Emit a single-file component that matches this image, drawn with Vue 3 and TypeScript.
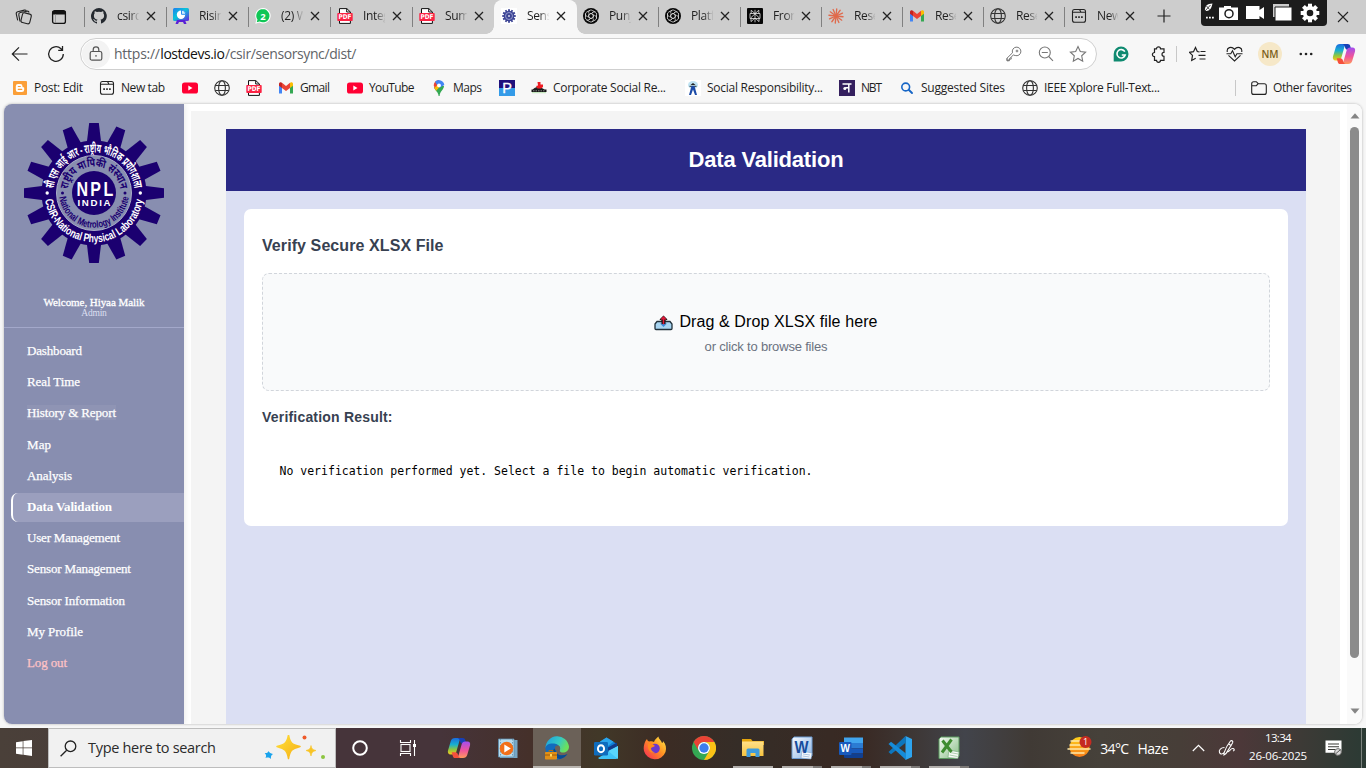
<script setup lang="ts">
import type { Directive } from 'vue'

/* Spreads the letters of an element so that its text takes the given width. */
const vFit: Directive<HTMLElement, number> = {
  mounted(el, { value }) {
    const count = (el.textContent ?? '').length
    const natural = el.getBoundingClientRect().width
    if (count > 1 && value) el.style.letterSpacing = `${(value - natural) / (count - 1)}px`
  },
}

interface Tab { icon: string; title: string; width: number; active?: boolean; noSep?: boolean }
const tabs: Tab[] = [
  { icon: 'github', title: 'csirdo', width: 82 },
  { icon: 'present', title: 'Risin', width: 82 },
  { icon: 'whatsapp', title: '(2) W', width: 82 },
  { icon: 'pdf', title: 'Integ', width: 82 },
  { icon: 'pdf', title: 'Sumr', width: 82 },
  { icon: 'gear', title: 'Sens', width: 82, active: true },
  { icon: 'gpt', title: 'Punj', width: 82, noSep: true },
  { icon: 'gpt', title: 'Platf', width: 82 },
  { icon: 'perplex', title: 'Fron', width: 81 },
  { icon: 'claude', title: 'Rese', width: 81 },
  { icon: 'gmail', title: 'Rese', width: 81 },
  { icon: 'globe', title: 'Rese', width: 81 },
  { icon: 'newtab', title: 'New', width: 82 },
]

interface Mark { icon: string; title?: string; fit?: number; width: number }
const marks: Mark[] = [
  { icon: 'blogger', title: 'Post: Edit', fit: 49, width: 87 },
  { icon: 'newtab', title: 'New tab', fit: 44, width: 83 },
  { icon: 'youtube', width: 32 },
  { icon: 'globe', width: 32 },
  { icon: 'pdf', width: 32 },
  { icon: 'gmail', title: 'Gmail', fit: 30, width: 69 },
  { icon: 'youtube', title: 'YouTube', fit: 45.5, width: 84 },
  { icon: 'maps', title: 'Maps', fit: 29, width: 68 },
  { icon: 'pbox', width: 32 },
  { icon: 'corp', title: 'Corporate Social Re...', fit: 113, width: 154 },
  { icon: 'social', title: 'Social Responsibility...', fit: 116, width: 154 },
  { icon: 'nbt', title: 'NBT', fit: 21, width: 60 },
  { icon: 'bing', title: 'Suggested Sites', fit: 84, width: 123 },
  { icon: 'globe', title: 'IEEE Xplore Full-Text...', fit: 116, width: 150 },
]

interface NavItem { label: string; fit: number; kind?: string }
const nav: NavItem[] = [
  { label: 'Dashboard', fit: 55 },
  { label: 'Real Time', fit: 53 },
  { label: 'History & Report', fit: 89, kind: 'marked' },
  { label: 'Map', fit: 24 },
  { label: 'Analysis', fit: 45 },
  { label: 'Data Validation', fit: 85, kind: 'active' },
  { label: 'User Management', fit: 93 },
  { label: 'Sensor Management', fit: 104 },
  { label: 'Sensor Information', fit: 98 },
  { label: 'My Profile', fit: 56 },
  { label: 'Log out', fit: 40, kind: 'logout' },
]

interface TaskApp { icon: string; state?: string }
const apps: TaskApp[] = [
  { icon: 'copilot' },
  { icon: 'media' },
  { icon: 'edge', state: 'focused' },
  { icon: 'outlook' },
  { icon: 'firefox' },
  { icon: 'chrome' },
  { icon: 'folder', state: 'open' },
  { icon: 'wordold', state: 'multi' },
  { icon: 'word', state: 'multi' },
  { icon: 'vscode', state: 'multi' },
  { icon: 'excel', state: 'multi' },
]

const teeth = Array.from({ length: 16 }, (_, i) => i * 22.5)
const miniTeeth = Array.from({ length: 12 }, (_, i) => i * 30)
const rays = Array.from({ length: 12 }, (_, i) => i * 30)
</script>

<template>
  <div class="screen">
    <svg class="sprite" width="0" height="0" aria-hidden="true">
      <defs>
        <linearGradient id="gPresent" x1="0" y1="0" x2="1" y2="1"><stop offset="0" stop-color="#1f7cf0" /><stop offset=".45" stop-color="#08c5d8" /><stop offset="1" stop-color="#6b1de0" /></linearGradient>
        <linearGradient id="gCopA" x1="0" y1="0" x2="0" y2="1"><stop offset="0" stop-color="#1a6be0" /><stop offset=".4" stop-color="#18b0d0" /><stop offset=".7" stop-color="#8fc63f" /><stop offset="1" stop-color="#f8c81c" /></linearGradient>
        <linearGradient id="gCopB" x1="0" y1="0" x2="0" y2="1"><stop offset="0" stop-color="#ff9a5c" /><stop offset=".45" stop-color="#f0559a" /><stop offset="1" stop-color="#a24df0" /></linearGradient>
        <linearGradient id="gEdge" x1="0" y1="0" x2="1" y2=".4"><stop offset="0" stop-color="#1b9de2" /><stop offset=".6" stop-color="#35c9c4" /><stop offset="1" stop-color="#6be05c" /></linearGradient>
        <linearGradient id="gFire" x1="1" y1="0" x2="0" y2="1"><stop offset="0" stop-color="#fff04a" /><stop offset=".45" stop-color="#ff9322" /><stop offset="1" stop-color="#f5205a" /></linearGradient>
        <linearGradient id="gFolder" x1="0" y1="0" x2="0" y2="1"><stop offset="0" stop-color="#ffe08a" /><stop offset="1" stop-color="#f6c33f" /></linearGradient>
        <linearGradient id="gSun" x1="0" y1="0" x2="0" y2="1"><stop offset="0" stop-color="#ffd21c" /><stop offset="1" stop-color="#f57a18" /></linearGradient>
        <linearGradient id="gDoc" x1="0" y1="0" x2="1" y2="1"><stop offset="0" stop-color="#f4f9ff" /><stop offset="1" stop-color="#8fb6e4" /></linearGradient>
        <linearGradient id="gDocG" x1="0" y1="0" x2="1" y2="1"><stop offset="0" stop-color="#f6fbf4" /><stop offset="1" stop-color="#86bd86" /></linearGradient>
        <linearGradient id="gStar" x1="0" y1="0" x2="1" y2="1"><stop offset="0" stop-color="#ffdf3a" /><stop offset="1" stop-color="#f5b016" /></linearGradient>
      </defs>
      <symbol id="github" viewBox="0 0 16 16"><path fill="#24292f" d="M8 0a8 8 0 0 0-2.5 15.6c.4.1.5-.2.5-.4v-1.5c-2.2.5-2.7-1-2.7-1-.4-.9-.9-1.2-.9-1.2-.7-.5.1-.5.1-.5.8.1 1.2.8 1.2.8.7 1.3 1.9.9 2.3.7.1-.5.3-.9.5-1.1-1.8-.2-3.6-.9-3.6-4 0-.9.3-1.6.8-2.1-.1-.2-.4-1 .1-2.1 0 0 .7-.2 2.2.8a7.500 7.500 0 0 1 4 0c1.500-1 2.200-.8 2.200-.8.4 1.100.2 1.900.1 2.100.5.6.8 1.300.8 2.100 0 3.100-1.900 3.800-3.700 4 .3.300.6.800.6 1.500v2.200c0 .2.100.5.600.400A8 8 0 0 0 8 0z" /></symbol>
      <symbol id="present" viewBox="0 0 16 16"><rect y="0" width="16" height="13" rx="1.500" fill="url(#gPresent)" /><path d="M4 12h8l1.500 4H11l-1-2H6l-1 2H2.500z" fill="#5b21d6" /><circle cx="8" cy="6.800" r="4.200" fill="#fff" /><path d="M8.500 2v4.300h4.300A4.500 4.500 0 0 0 8.500 2z" fill="#cfeefd" stroke="#2a8ff0" stroke-width="1" /></symbol>
      <symbol id="whatsapp" viewBox="0 0 16 16"><path d="M.3 15.700 1.400 11.800A7.700 7.700 0 1 1 4.400 14.600z" fill="#fff" /><path d="M1.700 14.300l.8-2.700A6.600 6.600 0 1 1 4.600 13.500z" fill="#10c656" /><text x="8" y="11.500" text-anchor="middle" font-family="Open Sans, sans-serif" font-size="9.500" font-weight="700" fill="#fff">2</text></symbol>
      <symbol id="pdf" viewBox="0 0 16 16"><path d="M2.500 5V.6h7.300L13.400 4v11.400H2.500V5" fill="#fff" stroke="#111" stroke-width="1" /><path d="M9.700.5V4h3.700" fill="none" stroke="#111" /><rect x=".3" y="5" width="15.400" height="8" rx=".8" fill="#fb2344" /><text x="8" y="11.400" text-anchor="middle" font-family="DejaVu Sans, sans-serif" font-size="6.500" font-weight="700" fill="#fff" textLength="13" lengthAdjust="spacingAndGlyphs">PDF</text></symbol>
      <symbol id="gear" viewBox="0 0 16 16"><rect width="16" height="16" fill="#fff" /><g fill="#3d4595"><rect v-for="a in miniTeeth" :key="a" x="7.100" y="1.200" width="1.800" height="3" :transform="`rotate(${a} 8 8)`" /><circle cx="8" cy="8" r="5.300" /></g><circle cx="8" cy="8" r="3.500" fill="none" stroke="#a9aedb" stroke-width=".8" /><circle cx="8" cy="8" r="1" fill="#d5d8ee" /></symbol>
      <symbol id="gpt" viewBox="0 0 16 16"><circle cx="8" cy="8" r="8" fill="#080808" /><g fill="none" stroke="#d8d8d8" stroke-width=".8"><path v-for="a in [0, 60, 120, 180, 240, 300]" :key="a" d="M5.700 5.500V4.300a2.300 2.300 0 0 1 3.500-2l3.200 1.900M8 5.400 5.700 6.700V9.300" :transform="`rotate(${a} 8 8)`" /></g></symbol>
      <symbol id="perplex" viewBox="0 0 16 16"><rect width="16" height="16" rx="1" fill="#070707" /><path d="M8 1.800v12.500M3 5.500h10v5H3zM8 5.600 4.200 2.200v3.300M8 5.600l3.800-3.400v3.300M8 5.800l-4 3.800v4L8 10M8 5.800l4 3.800v4L8 10" fill="none" stroke="#e6e6e6" stroke-width=".8" /></symbol>
      <symbol id="claude" viewBox="0 0 16 16"><g stroke="#e0694b" stroke-width="1.300" stroke-linecap="round"><path v-for="a in rays" :key="a" d="M8 8V.900" :transform="`rotate(${a + 6} 8 8)`" /></g></symbol>
      <symbol id="gmail" viewBox="0 0 16 16"><path d="M1 3.500v10h3V7z" fill="#4285f4" /><path d="M15 3.500v10h-3V7z" fill="#34a853" /><path d="M1 4c0-2 2-2 3-1.200V8L1 5.800z" fill="#c5221f" /><path d="M15 4c0-2-2-2-3-1.200V8l3-2.200z" fill="#fbbc04" /><path d="M4 2.800 8 6l4-3.200V8l-4 3-4-3z" fill="#ea4335" /></symbol>
      <symbol id="globe" viewBox="0 0 16 16"><g fill="none" stroke="#333" stroke-width="1.100"><circle cx="8" cy="8" r="7.300" /><ellipse cx="8" cy="8" rx="3.400" ry="7.300" /><path d="M1.300 5.500h13.400M1.300 10.500h13.400" /></g></symbol>
      <symbol id="newtab" viewBox="0 0 16 16"><path d="M3.500 1.500h5l1.500 2.800h4.500v8a2 2 0 0 1-2 2h-9a2 2 0 0 1-2-2v-9a2 2 0 0 1 2-1.800zM1.500 4.300H10M9 1.500h3.500a2 2 0 0 1 2 2v1" fill="none" stroke="#222" stroke-width="1.100" /><path d="M4.300 8.300h1.600v1.600H4.300zM7.200 8.300h1.600v1.600H7.200zM10.100 8.300h1.600v1.600h-1.600z" fill="#222" /></symbol>
      <symbol id="blogger" viewBox="0 0 16 16"><rect x="1" y="1" width="14" height="14" rx="1" fill="#fb9f38" /><path d="M6 4h2.300a2.200 2.200 0 0 1 2.200 2.200c0 .8.100 1 .8 1s.9.300.9.900v1.700A2.300 2.300 0 0 1 9.900 12H6a2.200 2.200 0 0 1-2.200-2.200V6.200A2.200 2.200 0 0 1 6 4z" fill="#fff" /><path d="M6.300 6.500h2M6.300 9.400h3.400" stroke="#fb9f38" stroke-width="1.200" stroke-linecap="round" /></symbol>
      <symbol id="youtube" viewBox="0 0 16 16"><rect x="0" y="2.500" width="16" height="11" rx="2.600" fill="#ff0033" /><path d="M6.300 5.600v4.800L10.500 8z" fill="#fff" /></symbol>
      <symbol id="maps" viewBox="0 0 16 16"><path d="M3 7.500 8 5l5 1c0 3.500-4 5-4.400 10H7.600C7.400 12 4 10.500 3 7.500z" fill="#34a853" /><path d="M2.700 5.200A5.400 5.400 0 0 1 8 0v5.400L3.800 8.500z" fill="#ea4335" /><path d="M4 1.800A5.400 5.400 0 0 1 13.300 5L8 8z" fill="#4285f4" /><path d="M3.200 8 7 4.500 8.500 7 5.200 10.800z" fill="#fbbc04" /><circle cx="8" cy="5.400" r="1.900" fill="#fff" /></symbol>
      <symbol id="pbox" viewBox="0 0 16 16"><rect width="16" height="8" fill="#20107c" /><rect y="8" width="16" height="8" fill="#349be8" /><text x="8.200" y="13" text-anchor="middle" font-family="Liberation Sans, sans-serif" font-size="14.500" fill="#fff" stroke="#fff" stroke-width=".3">P</text></symbol>
      <symbol id="corp" viewBox="0 0 16 16"><path d="M1.500 10.500C2 8.500 4.500 7 7 7s5.500 1.500 7 3.500z" fill="#222" /><path d="M6.500 2h3v2.500H12V7L10 8.500H6.500L5 6l2-.5z" fill="#ee1c24" /><path d="M.5 9.500h15v2.500H.5z" fill="#151515" /><path d="M2 10.800h12" stroke="#888" stroke-dasharray="1.500 1" /><path d="M1 12.700h14" stroke="#b9e3b2" stroke-width="1" /></symbol>
      <symbol id="social" viewBox="0 0 16 16"><rect width="16" height="16" fill="#fff" /><ellipse cx="8" cy="5" rx="5" ry="4" fill="#bfe3f3" /><path d="M8 3 5.500 5h5z" fill="#222" /><path d="M4.500 6.300h7" stroke="#333" /><path d="M6.500 6 4 15h2L8 9.500 10 15h2L9.500 6z" fill="#1b4ba8" /></symbol>
      <symbol id="nbt" viewBox="0 0 16 16"><rect width="16" height="16" fill="#35205f" /><path d="M3.500 4h9M9.800 4v8.500M9.800 7.700H6.200" fill="none" stroke="#fff" stroke-width="1.500" /><circle cx="5.800" cy="8.400" r="1.500" fill="#fff" /></symbol>
      <symbol id="bing" viewBox="0 0 16 16"><circle cx="6.700" cy="7" r="3.900" fill="none" stroke="#1766c6" stroke-width="1.600" /><path d="M9.700 9.800 13 13" stroke="#1766c6" stroke-width="1.900" stroke-linecap="round" /></symbol>
      <symbol id="folderline" viewBox="0 0 16 16"><path d="M.7 3.700c0-1.200.8-2 2-2h2.600l1.900 2h6.100c1.200 0 2 .8 2 2v6.700c0 1.200-.8 2-2 2H2.700c-1.200 0-2-.8-2-2zM.7 5.700h4.600l1.900-2" fill="none" stroke="#222" stroke-width="1.100" /></symbol>
      <symbol id="copilot" viewBox="0 0 24 24"><path d="M8 2h6.300c-1 .8-1.500 1.800-1.900 3L9.400 15.500c-.6 2-1.600 3-3.500 3H3.600C1.400 18.500.4 17 1 14.600L3.800 5C4.400 3 5.800 2 8 2z" fill="url(#gCopA)" /><path d="M10.500 2h5.200c1.600 0 2.200.8 2.600 2.300l1 3.400h-3.200c-1.700 0-2.600-.8-3-2.300C12.700 3.600 12 2.500 10.500 2z" fill="#173fb6" /><g transform="rotate(180 12 12)"><path d="M8 2h6.300c-1 .8-1.500 1.800-1.900 3L9.400 15.500c-.6 2-1.600 3-3.500 3H3.600C1.400 18.500.4 17 1 14.600L3.800 5C4.400 3 5.800 2 8 2z" fill="url(#gCopB)" /><path d="M10.500 2h5.200c1.600 0 2.200.8 2.600 2.300l1 3.400h-3.200c-1.700 0-2.600-.8-3-2.300C12.700 3.600 12 2.500 10.500 2z" fill="#f5503c" /></g></symbol>
      <symbol id="media" viewBox="0 0 24 24"><path d="M4 4h17.500v18H4z" fill="#77a8c6" /><path d="M2.500 3H18v18H2.500z" fill="#b6dcef" stroke="#5d8eae" stroke-width=".8" /><path d="M4.500 3v18M16.500 3v18" stroke="#6b9cb9" stroke-dasharray="1.500 1.500" /><circle cx="10.500" cy="12.500" r="6.800" fill="#f27019" /><path d="M8.300 8.500v8l6.500-4z" fill="#fff" /></symbol>
      <symbol id="edge" viewBox="0 0 24 24"><path d="M.5 12A11.800 11.800 0 0 1 24 10.500c0 4-3 6-6 6-2.500 0-3.500-1-3-2.500C16 10 12 7.500 8 8.500 4 9 1 11 .5 12z" fill="url(#gEdge)" /><path d="M.3 12c1-4 5-5 8.700-4.500 4 .6 5.500 3 5.500 5-4-2-5.500 6 1.500 7 3 .400 5-.5 6-1A12 12 0 0 1 .3 12z" fill="#126bbd" /><path d="M8 14c0 5 3 8 7 9a12 12 0 0 0 7.500-5c-6 3-13 1-12-6z" fill="#084a91" /><circle cx="12.500" cy="12" r="2.600" fill="#6b6158" /><rect x="0" y="16" width="12" height="7.500" rx=".8" fill="#e18f16" /><path d="M0 19h12" stroke="#9e5c08" /><rect x="5" y="18" width="2" height="2.500" fill="#ffd75a" /><path d="M4 16v-1.500h4V16" fill="none" stroke="#b0700b" /></symbol>
      <symbol id="outlook" viewBox="0 0 24 24"><path d="M3 8 12.500 1.500 23 8v3L12 19 5 14z" fill="#0f7fd6" /><path d="M6 5.500 12.500 1.500l7 4.200L10 13z" fill="#2aa5ec" /><path d="m13 12 10-5.500V12l-9 4z" fill="#123b8a" /><path d="M24 10v11c0 1.200-.8 2-2 2H6c-1 0-1.500-.5-2-1z" fill="#3fc3f7" /><path d="M24 23 14 15 24 10z" fill="#58d5fc" /><rect y="6" width="14" height="13.500" rx="1.200" fill="#0f6cbd" /><ellipse cx="7" cy="12.700" rx="3.100" ry="3.500" fill="none" stroke="#fff" stroke-width="1.900" /></symbol>
      <symbol id="firefox" viewBox="0 0 24 24"><path d="M2 6c.5-1 1-2 2-3 .3 1.500 1 2.300 2.500 2.500 2-.5 3.500 0 4.500.5C12 3 14 2 15.500.5 15.500 3 18 4 19 7c.8 0 1-1 1-2 3 3 3.700 7 2.500 11A11.300 11.300 0 0 1 1 15C.3 11.500 1 8.500 2 6z" fill="url(#gFire)" /><circle cx="12" cy="12.500" r="4.800" fill="#6b38cf" /><path d="M5 8c3-1 5 0 7 2-1 1-3 1-4 2 0 2 1 4 4 4.500C8 18 4 14 5 8z" fill="#ff8a1e" /></symbol>
      <symbol id="chrome" viewBox="0 0 24 24"><circle cx="12" cy="12" r="12" fill="#34a853" /><path d="M22.400 6A12 12 0 0 1 12 24l5.200-9A6 6 0 0 0 12 6z" fill="#fbc116" /><path d="M1.600 6A12 12 0 0 1 22.400 6H12a6 6 0 0 0-5.200 9z" fill="#ea4335" /><circle cx="12" cy="12" r="6" fill="#fff" /><circle cx="12" cy="12" r="4.700" fill="#3b7ded" /></symbol>
      <symbol id="folder" viewBox="0 0 24 24"><path d="M1 3h9l1.500 2H23v4H1z" fill="#e5a50c" /><path d="M1 5.500h21.500V20H1z" fill="url(#gFolder)" /><path d="M5.500 21v-7a1.500 1.500 0 0 1 1.500-1.500h10a1.500 1.500 0 0 1 1.500 1.500v7h-4v-4h-5v4z" fill="#3f9bdc" /></symbol>
      <symbol id="wordold" viewBox="0 0 24 24"><path d="M4 1h18v19l-3 2.500H2V3z" fill="url(#gDoc)" stroke="#6d9bd1" /><path d="m12 15 10 2-1 6-10-1z" fill="#f7fafd" stroke="#7ea4ce" stroke-width=".6" /><path d="m13 18 7 1M12.500 20l7 1" stroke="#8fb0d4" stroke-width=".7" /><text x="11.500" y="16.500" text-anchor="middle" font-family="Liberation Sans, sans-serif" font-size="16" font-weight="700" fill="#164c9c" textLength="14" lengthAdjust="spacingAndGlyphs">W</text></symbol>
      <symbol id="word" viewBox="0 0 24 24"><path d="M5 1.500h19V7H5z" fill="#41a5ee" /><path d="M5 7h19v5.300H5z" fill="#2b7cd3" /><path d="M5 12.300h19v5.200H5z" fill="#185abd" /><path d="M5 17.500h19V21a1 1 0 0 1-1 1H6a1 1 0 0 1-1-1z" fill="#103f91" /><rect y="6" width="12.500" height="13" rx="1" fill="#185abd" /><text x="6.200" y="16" text-anchor="middle" font-family="Liberation Sans, sans-serif" font-size="10" font-weight="700" fill="#fff">W</text></symbol>
      <symbol id="vscode" viewBox="0 0 24 24"><path d="M17.500 0 24 3v18l-6.500 3z" fill="#2da4ee" /><path d="m17.500 0 .5 6.500L3 18.300.5 16z" fill="#0d76bd" /><path d="M.5 8 3 5.800 18 17.500v6.500z" fill="#168bd8" /></symbol>
      <symbol id="excel" viewBox="0 0 24 24"><path d="M4 1h18v19l-3 2.500H2V3z" fill="url(#gDocG)" stroke="#5a9a5f" /><path d="m12 14 10 2-1 6.500-10-1z" fill="#f7fbf6" stroke="#6ea573" stroke-width=".6" /><path d="m13 16.500 8 1.500M12.500 19l8 1.500" stroke="#8dba90" stroke-width=".7" /><path d="m5.500 4.500 9 11.500M14.500 3.500 5 16.500" stroke="#3d8c2f" stroke-width="3" /></symbol>
    </svg>

    <header class="tabstrip">
      <div class="lead">
        <svg width="18" height="18" viewBox="0 0 18 18" fill="none" stroke="#222" stroke-width="1.100"><rect x="6.700" y="5.300" width="9" height="10" rx="2" transform="rotate(14 11 10)" /><path d="M5 13.500 3.800 6.800c-.2-1.300.4-2 1.500-2.300L12 3.200c1.100-.2 1.800.2 2.100 1.300M2.700 12.300 1.300 6.100C1 4.800 1.600 4 2.700 3.700l6.600-1.600c1-.2 1.700.1 2 .8" /></svg>
        <svg width="16" height="16" viewBox="0 0 16 16"><rect x="1.600" y="1.600" width="12.800" height="12.800" rx="2" fill="none" stroke="#111" stroke-width="1.300" /><path d="M1.500 2h13v3.500h-13z" fill="#111" /><path d="M4.500 5v9" stroke="#888" stroke-width=".7" /></svg>
      </div>
      <div v-for="(t, i) in tabs" :key="i" class="tab" :class="{ active: t.active, nosep: t.noSep, slim: i > 7 }" :style="{ width: t.width + 'px' }">
        <svg class="fav"><use :href="'#' + t.icon" /></svg>
        <span class="tabtitle">{{ t.title }}</span>
        <svg class="close" viewBox="0 0 10 10"><path d="m1 1 8 8M9 1 1 9" stroke="#222" stroke-width="1.300" /></svg>
      </div>
      <div class="plus"><svg width="14" height="14" viewBox="0 0 14 14"><path d="M7 .5v13M.5 7h13" stroke="#222" stroke-width="1.200" /></svg></div>
      <div class="capture">
        <svg width="126" height="26" viewBox="0 0 126 26" fill="#fff">
          <path d="M4 11c-.5-3 1-6 4-7l3.500-.5L10.500 7c-1 3-3.500 4.500-6.500 4z" /><path d="m4 11 5.500-6M5.500 6l3 3.500" stroke="#1c1c1c" stroke-width=".8" />
          <path d="M5 16.700h1.800v1.800H5zM8 16.700h1.800v1.800H8zM11 16.700h1.800v1.800H11z" />
          <path d="M18 7.500h5V6h7v1.500h7V20H18z" /><circle cx="28" cy="13.700" r="4" fill="#fff" stroke="#1c1c1c" stroke-width="1.500" />
          <path d="M45 6h13.500v4L63 7v12l-4.500-3v3H45z" />
          <path d="M72 4h16v13H72z" fill="#ccc" /><path d="M74 7h17v14H74z" stroke="#1c1c1c" />
          <g transform="translate(109 13)"><circle r="5.200" fill="none" stroke="#fff" stroke-width="3.800" /><rect v-for="a in [0, 45, 90, 135, 180, 225, 270, 315]" :key="a" x="-2" y="-9.300" width="4" height="4" :transform="`rotate(${a})`" /></g>
        </svg>
      </div>
      <div class="winclose"><svg width="12" height="12" viewBox="0 0 12 12"><path d="m1 1 10 10M11 1 1 11" stroke="#222" stroke-width="1.100" /></svg></div>
    </header>

    <div class="toolbar">
      <div class="tool back"><svg width="18" height="16" viewBox="0 0 18 16" fill="none" stroke="#222" stroke-width="1.200"><path d="M16.500 8H1.500M8 1.300 1.300 8 8 14.700" /></svg></div>
      <div class="tool reload"><svg width="18" height="18" viewBox="0 0 18 18" fill="none" stroke="#222" stroke-width="1.300"><path d="M16.300 9A7.300 7.300 0 1 1 14 3.700l1.300 1.400M15.500 1v4.300h-4.300" /></svg></div>
      <div class="address">
        <div class="lock"><svg width="14" height="16" viewBox="0 0 14 16" fill="none" stroke="#555" stroke-width="1.200"><rect x="1.200" y="5.500" width="11.600" height="8.700" rx="1.800" /><path d="M4.200 5.500V3.700a2.800 2.800 0 0 1 5.600 0v1.800" /><circle cx="7" cy="9.900" r=".8" fill="#555" stroke="none" /></svg></div>
        <div class="url"><span v-fit="46">https://</span><span v-fit="64.500" class="host">lostdevs.io</span><span v-fit="131.500">/csir/sensorsync/dist/</span></div>
        <div class="fieldicons">
          <svg width="16" height="16" viewBox="0 0 16 16" fill="none" stroke="#777" stroke-width="1"><path d="M7.300 9 2.600 13.700v1H1v-2.500L6.500 6.800A4.300 4.300 0 1 1 9.200 9.500z" /><path d="M1 12.200v2.500h2.500v-1.600h1.700v-1.700" /><circle cx="11" cy="5" r=".9" /></svg>
          <svg width="16" height="16" viewBox="0 0 16 16" fill="none" stroke="#777" stroke-width="1.100"><circle cx="6.800" cy="6.500" r="5.500" /><path d="M3.800 6.500h6M10.700 10.500 15 14.800" /></svg>
          <svg width="18" height="18" viewBox="0 0 18 18" fill="none" stroke="#777" stroke-width="1.100"><path d="m9 1.500 2.300 5 5.300.6-3.900 3.700 1 5.400L9 13.500l-4.700 2.700 1-5.400L1.400 7.100l5.300-.6z" /></svg>
        </div>
      </div>
      <div class="tool ext"><svg width="16" height="16" viewBox="0 0 16 16"><path d="M8 .5A7.500 7.500 0 1 1 8 15.500H.7V8A7.400 7.400 0 0 1 8 .5z" fill="#0f8a70" /><path d="M11.800 5.600A4.200 4.200 0 1 0 12.200 9H8.800" fill="none" stroke="#fff" stroke-width="1.600" /></svg></div>
      <div class="tool"><svg width="17" height="17" viewBox="0 0 17 17" fill="none" stroke="#222" stroke-width="1.200"><path d="M4.500 2.800h2a2 2 0 0 1 4 0h3.500v3.500a2 2 0 0 0 0 4v4h-3.500a2 2 0 0 1-4 0h-2v-3.600a2.100 2.100 0 1 1 0-4.200z" /></svg></div>
      <i class="divider"></i>
      <div class="tool fav2"><svg width="18" height="17" viewBox="0 0 18 17" fill="none" stroke="#222" stroke-width="1.200"><path d="M10.500 5.800 8.300 5.500 6.500 1.500l-2 4.200-4 .6 3 3.100L2.700 14.500l4-2.200M11.500 5.500h5M9.500 9.300h7M10.500 13h6" /></svg></div>
      <div class="tool"><svg width="17" height="16" viewBox="0 0 17 16" fill="none" stroke="#222" stroke-width="1.100"><path d="M1.300 6C.3 1.500 5.500-.3 8.500 3.300 11.500-.3 16.700 1.500 15.700 6M2.500 9.300l6 5.600 6-5.600M.5 7.700h4.300l1.700-3 2.700 6 1.700-3h5.600" /></svg></div>
      <div class="tool"><span class="avatar">NM</span></div>
      <div class="tool"><svg width="14" height="4" viewBox="0 0 14 4" fill="#222"><circle cx="1.800" cy="2" r="1.300" /><circle cx="7" cy="2" r="1.300" /><circle cx="12.200" cy="2" r="1.300" /></svg></div>
      <div class="tool pilot"><svg width="24" height="24"><use href="#copilot" /></svg></div>
    </div>

    <nav class="bookmarks">
      <div v-for="(m, i) in marks" :key="i" class="mark" :style="{ width: m.width + 'px' }">
        <svg class="fav"><use :href="'#' + m.icon" /></svg>
        <span v-if="m.title" v-fit="m.fit ?? 0" class="marktext">{{ m.title }}</span>
      </div>
      <i class="divider"></i>
      <div class="mark other"><svg class="fav"><use href="#folderline" /></svg><span v-fit="79" class="marktext">Other favorites</span></div>
    </nav>

    <div class="frame">
      <div class="page">
        <aside class="sidebar">
          <svg class="logo" width="144" height="144" viewBox="-72 -72 144 144">
            <defs>
              <path id="outTop" d="M-40.500 0A40.500 40.500 0 0 1 40.500 0" />
              <path id="outBot" d="M-49.300 0A49.300 49.300 0 0 0 49.300 0" />
              <path id="inTop" d="M-26.500 0A26.500 26.500 0 0 1 26.500 0" />
              <path id="inBot" d="M-34.800 0A34.800 34.800 0 0 0 34.800 0" />
            </defs>
            <g fill="#1b0070">
              <path v-for="a in teeth" :key="a" d="M-7.500-48-4.800-70H4.800L7.500-48z" :transform="`rotate(${a})`" />
              <circle r="52.500" />
            </g>
            <circle r="37.500" fill="#888eb0" stroke="#a9adc8" stroke-width="1" />
            <circle r="22" fill="#1b0070" />
            <g fill="#fff" font-family="Noto Sans, Liberation Sans, sans-serif" font-weight="700" text-anchor="middle">
              <text font-size="12.500"><textPath href="#outTop" startOffset="50%" textLength="118" lengthAdjust="spacingAndGlyphs">सी एस आई आर - राष्ट्रीय भौतिक प्रयोगशाला</textPath></text>
              <text font-size="11.500" font-family="Liberation Sans"><textPath href="#outBot" startOffset="50%" textLength="141" lengthAdjust="spacingAndGlyphs">CSIR-National Physical Laboratory</textPath></text>
              <text x="1" y="3" font-size="20" font-family="Liberation Sans" textLength="46" lengthAdjust="spacing" transform="scale(.8 1)">NPL</text>
              <text y="13" font-size="9.700" font-family="Liberation Sans" textLength="33" lengthAdjust="spacing">INDIA</text>
              <circle cx="-46.800" r="1.700" /><circle cx="46.300" r="1.700" />
            </g>
            <g fill="#1b0070" font-family="Noto Sans, Liberation Sans, sans-serif" font-weight="700" text-anchor="middle">
              <text font-size="11.500"><textPath href="#inTop" startOffset="50%" textLength="75" lengthAdjust="spacingAndGlyphs">राष्ट्रीय मापिकी संस्थान</textPath></text>
              <text font-size="10" font-family="Liberation Sans"><textPath href="#inBot" startOffset="50%" textLength="101" lengthAdjust="spacingAndGlyphs">National Metrology Institute</textPath></text>
              <circle cx="-31.500" r="1.500" /><circle cx="31" r="1.500" />
            </g>
          </svg>
          <div class="welcome"><span v-fit="101">Welcome, Hiyaa Malik</span></div>
          <div class="role"><span v-fit="25.500">Admin</span></div>
          <ul class="menu">
            <li v-for="n in nav" :key="n.label" :class="n.kind"><span v-fit="n.fit">{{ n.label }}</span></li>
          </ul>
        </aside>
        <main class="main">
          <section class="panel">
            <h1><span v-fit="155">Data Validation</span></h1>
            <div class="card">
              <h2><span v-fit="181.500">Verify Secure XLSX File</span></h2>
              <div class="drop">
                <p class="big">
                  <svg width="19" height="16" viewBox="0 0 19 16"><path d="M1 9 3 6.500h13L18 9v4.500a1 1 0 0 1-1 1H2a1 1 0 0 1-1-1z" fill="#a8d5f2" stroke="#20303a" stroke-width="1.300" /><path d="m6 8.500 3.500 3.500L13 8.500z" fill="#3b8ad9" /><path d="M5.500 4.500 9.500.5l4 4-2 1V9h-4V5.500z" fill="#111" /><path d="M9.500 9.300V2.800M7.300 4.500l2.200-2.300 2.200 2.300" stroke="#e0193a" stroke-width="1.600" fill="none" /></svg>
                  <span v-fit="198">Drag &amp; Drop XLSX file here</span>
                </p>
                <p class="small"><span v-fit="123">or click to browse files</span></p>
              </div>
              <h3><span v-fit="130.500">Verification Result:</span></h3>
              <pre><span v-fit="533">No verification performed yet. Select a file to begin automatic verification.</span></pre>
            </div>
          </section>
        </main>
        <div class="scroll">
          <svg width="10" height="6" viewBox="0 0 10 6"><path d="M5 .3 9.500 5.500h-9z" fill="#858585" /></svg>
          <div class="track"><div class="thumb"></div></div>
          <svg width="10" height="6" viewBox="0 0 10 6"><path d="M5 5.700.5.500h9z" fill="#858585" /></svg>
        </div>
      </div>
    </div>

    <footer class="taskbar">
      <div class="start"><svg width="16" height="16" viewBox="0 0 16 16" fill="#fff"><path d="M0 2.200 6.700 1.200v6.400H0zM7.400 1.100 16 0v7.600H7.400zM0 8.300h6.700v6.400L0 13.800zM7.400 8.300H16V16l-8.600-1.200z" /></svg></div>
      <div class="search">
        <svg width="17" height="17" viewBox="0 0 17 17" fill="none" stroke="#222" stroke-width="1.300"><circle cx="10.500" cy="6.300" r="5.300" /><path d="M6.700 10.200.6 16.300" /></svg>
        <span v-fit="128">Type here to search</span>
        <svg class="sparkle" width="62" height="26" viewBox="0 0 62 26"><path d="M24.500 0c1.500 8 3 9.500 11.500 11.500C27.500 14 26 15 24.500 23.500 23 15 21 14 13 11.500 21 9.500 23 8 24.500 0z" fill="url(#gStar)" stroke="url(#gStar)" stroke-width="1.500" stroke-linejoin="round" /><path d="M47 10.500c.7 3.500 1.500 4 5 5-3.500 1-4.300 2-5 5.500-.7-3.500-1.500-4.500-5-5.500 3.500-1 4.300-1.500 5-5z" fill="#f8c425" stroke="#f8c425" stroke-width=".6" /><path d="M4.500 16c1.200 2 2 2.500 4.500 3-2 1.500-2.200 2.300-2 5-2-1.600-3-1.800-5.500-1 1-2.400.8-3-.8-5 2.500.2 3.200-.2 3.800-2z" fill="#1aa3ec" /><circle cx="40.500" cy="2.500" r="2" fill="#ee5a2a" /><circle cx="59" cy="22" r="2" fill="#8cc540" /></svg>
      </div>
      <div class="cell"><svg width="18" height="18" viewBox="0 0 18 18"><circle cx="9" cy="9" r="6.800" fill="none" stroke="#fff" stroke-width="2" /></svg></div>
      <div class="cell"><svg width="18" height="18" viewBox="0 0 18 18" fill="none" stroke="#fff" stroke-width="1.100"><rect x="2" y="5.500" width="9" height="7" /><path d="M1.500 1v2.500h10V1M1.500 17v-2.500h10V17M15.500 1v16" /><path d="M14 5h3v3h-3z" fill="#fff" stroke="none" /></svg></div>
      <div class="apps">
        <div v-for="(a, i) in apps" :key="i" class="app" :class="a.state"><svg width="24" height="24"><use :href="'#' + a.icon" /></svg></div>
      </div>
      <div class="tray">
        <svg class="weather" width="26" height="24" viewBox="0 0 26 24"><circle cx="12.500" cy="12" r="10" fill="url(#gSun)" /><path d="M4 6h9M3 10h10M1 14h22M4 18h13" stroke="#ffe9a8" stroke-width="1.500" stroke-linecap="round" /><circle cx="18.500" cy="7" r="6" fill="#c52b22" /><text x="18.500" y="10.200" text-anchor="middle" font-family="Open Sans, sans-serif" font-size="9" fill="#fff">1</text></svg>
        <span v-fit="29" class="temp">34°C</span><span v-fit="31" class="haze">Haze</span>
        <svg class="chev" width="13" height="8" viewBox="0 0 13 8"><path d="m.8 7 5.700-5.700L12.200 7" fill="none" stroke="#fff" stroke-width="1.200" /></svg>
        <svg class="pen" width="18" height="18" viewBox="0 0 18 18" fill="none" stroke="#fff" stroke-width="1.100"><path d="M6 14c1-3 4-9 6.500-12 1.500-1 3 .3 2 2L8 14.500 6 16zM6.500 8.500C3 8.500.5 11 1.500 13.500s3.500 1.500 5-.5M9.500 13c2.500-1 3-3.500 5-3.500s2.500 2 .5 2.500M11 5l2.500 2" /></svg>
        <div class="clock"><span v-fit="26.500">13:34</span><span v-fit="58">26-06-2025</span></div>
        <svg class="note" width="18" height="17" viewBox="0 0 18 17"><path d="M.5.500h16v12.300h-4V16l-3.200-3.200H.5z" fill="#fff" /><path d="M3 4h11M3 6.700h11M3 9.500h7" stroke="#3a3a36" stroke-width="1.100" /><circle cx="13" cy="12" r="3.400" fill="#ddd" stroke="#3a3a36" stroke-width=".7" /><path d="m11 13.500 4-3.500" stroke="#3a3a36" stroke-width=".8" /></svg>
        <i class="peek"></i>
      </div>
    </footer>
  </div>
</template>

<style>
html, body { margin: 0; overflow: hidden; }
</style>

<style scoped>
.screen { width: 1366px; height: 768px; display: flex; flex-direction: column; background: #f7f7f7; font-family: "Open Sans", "Noto Sans", sans-serif; overflow: hidden; color: #1f1f1f; }
.screen svg { flex: none; display: block; }
.sprite { position: absolute; }
span { white-space: nowrap; display: inline-block; }
.fav { width: 16px; height: 16px; }

.tabstrip { height: 34px; flex: none; display: flex; background: #cdcdcd; }
.lead { width: 84px; display: flex; align-items: center; gap: 18px; padding-left: 15px; box-sizing: border-box; padding-bottom: 1px; }
.tab { box-sizing: border-box; display: flex; align-items: center; padding: 0 0 2px 7px; position: relative; flex: none; }
.tab::before { content: ""; position: absolute; left: 0; top: 7px; width: 1px; height: 20px; background: #808080; }
.tab.active::before, .tab.nosep::before { display: none; }
.tab.active { background: #f7f7f7; border-radius: 8px 8px 0 0; box-shadow: 1px 0 #f7f7f7; }
.tab.active::after { content: ""; position: absolute; left: -8px; right: -9px; bottom: 0; height: 8px; background: radial-gradient(circle at 0 0, transparent 7.500px, #f7f7f7 8px) left / 8px 8px no-repeat, radial-gradient(circle at 100% 0, transparent 7.500px, #f7f7f7 8px) right / 8px 8px no-repeat; }
.tabtitle { margin-left: 10px; width: 23px; overflow: hidden; font-size: 12px; line-height: 18px; letter-spacing: -0.35px; mask-image: linear-gradient(90deg, #000 55%, transparent 98%); }
.close { width: 10px; height: 10px; margin-left: 6px; }
.slim .tabtitle { width: 22px; }
.plus { width: 36px; display: flex; align-items: center; justify-content: center; padding-bottom: 2px; box-sizing: border-box; margin-right: 19px; }
.slim + .plus { padding-right: 1px; }
.capture { width: 126px; height: 26px; background: #1c1c1c; border-radius: 0 0 4px 4px; }
.winclose { flex: 1; display: flex; align-items: center; justify-content: center; padding-right: 7px; }

.toolbar { height: 39px; box-sizing: border-box; flex: none; display: flex; align-items: center; padding: 1px 0 0; }
.tool { width: 36px; height: 36px; display: flex; align-items: center; justify-content: center; flex: none; }
.back { margin-left: 2px; }
.reload { margin-right: 6px; }
.address { width: 1017px; height: 32px; box-sizing: border-box; background: #fff; border: 1px solid #cfcfcf; border-radius: 16px; display: flex; align-items: center; padding: 0 9px 0 1px; }
.lock { width: 28px; height: 28px; border-radius: 14px; background: #f3f3f3; display: flex; align-items: center; justify-content: center; }
.url { margin-left: 4px; font-size: 14px; line-height: 20px; color: #5f6368; display: flex; flex: 1; gap: .6px; }
.host { color: #111; }
.fieldicons { display: flex; align-items: center; gap: 15.500px; }
.ext { margin-left: 6px; margin-right: 1px; }
.divider { width: 1px; height: 16px; background: #c8c8c8; flex: none; }
.fav2 { margin-left: 3px; }
.avatar { width: 24px; height: 24px; border-radius: 12px; background: #f6e8c8; color: #7a5e1a; font-size: 10px; font-weight: 600; line-height: 24px; text-align: center; }
.pilot { margin-left: 2px; }

.bookmarks { height: 31px; box-sizing: border-box; flex: none; display: flex; align-items: center; padding: 0 0 1px 12px; }
.mark { display: flex; align-items: center; gap: 6px; flex: none; }
.marktext { font-size: 12px; line-height: 18px; }
.bookmarks .divider { margin-left: 63px; }
.other { margin-left: 15px; }

.frame { height: 624px; flex: none; padding: 0 4px 4px; box-sizing: border-box; }
.page { height: 620px; display: flex; background: #fff; border-radius: 8px; overflow: hidden; box-shadow: 0 0 3px rgba(0, 0, 0, .28); }
.sidebar { width: 180px; flex: none; background: #888eb0; display: flex; flex-direction: column; color: #fff; font-family: "Liberation Serif", serif; box-shadow: 0 0 7px rgba(0, 0, 0, .12); }
.logo { margin: 17px 0 0 18px; }
.welcome { text-align: center; font-size: 11px; line-height: 13px; margin-top: 31px; -webkit-text-stroke: .3px #fff; }
.role { text-align: center; font-size: 9.500px; line-height: 10px; margin-top: -1px; color: #dcdff0; height: 19px; border-bottom: 1px solid #a3a8ca; flex: none; }
.menu { list-style: none; margin: 9px 0 0; padding: 0 0 0 7px; display: flex; flex-direction: column; gap: 2.200px; }
.menu li { height: 29px; box-sizing: border-box; line-height: 28px; padding-left: 16px; font-size: 13px; -webkit-text-stroke: .25px currentColor; }
.menu li.marked span { background: rgba(255, 255, 255, .06); line-height: 15px; }
.menu li.active { background: #9b9fbe; border-left: 2px solid #fff; padding-left: 14px; border-radius: 7px 0 0 7px; font-weight: 700; -webkit-text-stroke: 0; }
.menu li.logout { color: #ffc2c6; }

.main { width: 1149px; flex: none; margin: 7px 0 0 7px; background: #f4f4f4; padding: 18px 34px 0 35px; box-sizing: border-box; display: flex; font-family: "Liberation Sans", Arial, sans-serif; }
.panel { flex: 1; background: #dbdff3; }
h1 { margin: 0; height: 62px; background: #2a2985; color: #fff; font-size: 22px; line-height: 61px; text-align: center; font-weight: 700; }
.card { margin: 18px; height: 317px; box-sizing: border-box; background: #fff; border-radius: 7px; padding: 26px 18px 0; }
h2 { margin: 0; font-size: 16px; line-height: 22px; color: #374151; font-weight: 700; }
.drop { height: 118px; box-sizing: border-box; margin-top: 16px; border: 1px dashed #d1d5db; border-radius: 7px; background: #f9fafb; padding-top: 36px; display: flex; flex-direction: column; align-items: center; }
.drop p { margin: 0; display: flex; }
.big { font-size: 16px; line-height: 24px; color: #000; gap: 6px; }
.big svg { margin-top: 5px; }
.small { font-size: 13px; line-height: 18px; margin-top: 4px !important; color: #6b7280; }
h3 { margin: 17px 0 0; font-size: 14px; line-height: 18px; color: #374151; }
pre { margin: 0; padding: 36px 0 0 17.500px; font-family: "DejaVu Sans Mono", monospace; font-size: 11.500px; line-height: 18px; color: #000; }
.scroll { margin-left: 7px; flex: 1; background: #fafafa; display: flex; flex-direction: column; align-items: center; padding: 9px 0 10px; box-sizing: border-box; }
.track { flex: 1; padding-top: 8px; }
.thumb { width: 9px; height: 531px; border-radius: 5px; background: #8b8b8b; }

.taskbar { height: 40px; flex: none; display: flex; color: #fff; background: linear-gradient(90deg, #4a4039 0, #46343a 336px, #46343a 440px, #45302a 530px, #413828 600px, #3c2c24 660px, #352d27 740px, #392923 860px, #3d3634 910px, #42444b 965px, #403a35 1030px, #46413a 1100px, #473e38 1180px, #4c3839 1240px, #3d3a36 1300px, #2b3a34 1366px); }
.start { width: 48px; display: flex; align-items: center; justify-content: center; }
.search { width: 288px; box-sizing: border-box; background: #f1f1f1; border: 1px solid #bdbdbd; display: flex; align-items: center; padding-left: 11px; color: #2b2b2b; font-size: 14.500px; }
.search span { margin-left: 11px; line-height: 20px; width: max-content; }
.sparkle { margin-left: 48.500px; }
.cell { width: 48px; display: flex; align-items: center; justify-content: center; }
.apps { display: flex; margin-left: 2px; }
.app { width: 49px; display: flex; align-items: center; justify-content: center; position: relative; }
.app.focused { background: #6b6158; box-shadow: inset 0 -2px #b9b5b0; width: 48px; margin-left: 1px; }
.app.open::after, .app.multi::after { content: ""; position: absolute; left: 5px; bottom: 0; width: 40px; height: 2px; background: #b1aeab; }
.app.multi::after { background: linear-gradient(90deg, #b1aeab 31px, #7c7977 31px); }
.tray { flex: 1; display: flex; align-items: center; justify-content: flex-end; font-size: 14px; }
.weather { margin-right: 7px; margin-bottom: 3px; }
.temp { margin-right: 9px; }
.haze { margin-right: 24px; }
.chev { margin-right: 13px; }
.pen { margin-right: 12px; }
.clock { width: 60px; display: flex; flex-direction: column; align-items: center; font-size: 11.500px; line-height: 18px; margin-right: 17px; padding-bottom: 2px; }
.note { margin-right: 18px; }
.peek { width: 1px; height: 40px; background: #7b827e; margin-right: 4px; }
</style>
